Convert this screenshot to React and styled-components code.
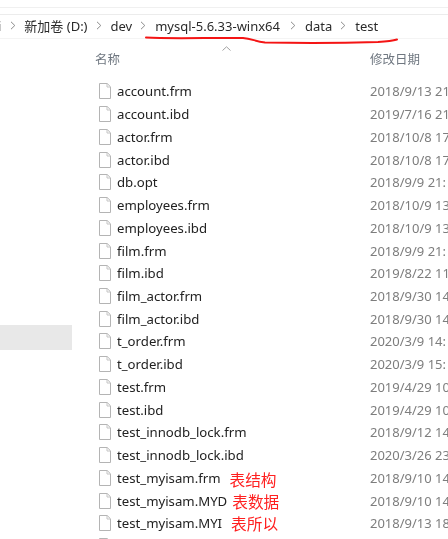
import React from "react";
import styled, { createGlobalStyle } from "styled-components";

const Global = createGlobalStyle`
  html, body { margin: 0; padding: 0; background: #fff; }
  body { width: 448px; height: 539px; overflow: hidden; font-family: "Noto Sans", "Noto Sans CJK SC", "Liberation Sans", sans-serif; }
`;

const Page = styled.div`
  position: relative;
  width: 448px;
  height: 539px;
  overflow: hidden;
  background: #fff;
`;

const TopStrip = styled.div`
  height: 7px;
  border-bottom: 1px solid #f0f0f0;
`;

const AddressBar = styled.div`
  height: 21px;
  margin-top: 6px;
  padding-bottom: 2px;
  border-top: 1px solid #ececec;
  border-bottom: 1px solid #f4f4f4;
  display: flex;
  align-items: center;
  font-size: 13px;
  color: #2a2a2a;
  white-space: nowrap;
  filter: blur(0.35px);
`;

const Crumb = styled.span`
  margin-left: ${(p) => p.$left}px;
`;

const Chevron = styled.svg`
  flex: none;
  width: 6px;
  height: 9px;
  margin-left: ${(p) => p.$left}px;
`;

const Body = styled.div`
  display: grid;
  grid-template-columns: 72px 1fr;
  height: 502px;
`;

const Sidebar = styled.aside`
  padding-top: 286px;
`;

const SideSelection = styled.div`
  height: 25px;
  background: #e8e8e8;
`;

const Main = styled.main`
  position: relative;
  min-width: 0;
`;

const SortCaret = styled.svg`
  position: absolute;
  left: 150px;
  top: 7px;
  width: 9px;
  height: 5px;
`;

const ColumnHeader = styled.div`
  display: grid;
  grid-template-columns: 275px 1fr;
  padding: 12px 0 0 23px;
  height: 25px;
  font-size: 12.5px;
  line-height: 18px;
  color: #6f7780;
  filter: blur(0.35px);
`;

const List = styled.div`
  padding-top: 4px;
`;

const Row = styled.div`
  display: grid;
  grid-template-columns: 275px 1fr;
  height: 22.74px;
  align-items: center;
  padding-left: 27px;
  white-space: nowrap;
  overflow: hidden;
  filter: blur(0.35px);
`;

const NameCell = styled.div`
  display: flex;
  align-items: center;
  min-width: 0;
`;

const FileIcon = styled.svg`
  flex: none;
  width: 12px;
  height: 16px;
  margin-right: 6px;
`;

const FileName = styled.span`
  font-size: 13.2px;
  color: #222;
`;

const Note = styled.span`
  margin-left: ${(p) => p.$left}px;
  margin-top: ${(p) => p.$top}px;
  font-size: 15.7px;
  line-height: 1;
  color: #ff2020;
  font-family: "Noto Sans CJK SC", sans-serif;
`;

const DateCell = styled.span`
  font-size: 13px;
  color: #7d7d7d;
  margin-left: -4px;
`;

const Underline = styled.svg`
  position: absolute;
  left: 0;
  top: 0;
  width: 448px;
  height: 60px;
  pointer-events: none;
`;

const files = [
  ["account.frm", "2018/9/13 21"],
  ["account.ibd", "2019/7/16 21"],
  ["actor.frm", "2018/10/8 17"],
  ["actor.ibd", "2018/10/8 17"],
  ["db.opt", "2018/9/9 21:"],
  ["employees.frm", "2018/10/9 13"],
  ["employees.ibd", "2018/10/9 13"],
  ["film.frm", "2018/9/9 21:"],
  ["film.ibd", "2019/8/22 11"],
  ["film_actor.frm", "2018/9/30 14"],
  ["film_actor.ibd", "2018/9/30 14"],
  ["t_order.frm", "2020/3/9 14:"],
  ["t_order.ibd", "2020/3/9 15:"],
  ["test.frm", "2019/4/29 10"],
  ["test.ibd", "2019/4/29 10"],
  ["test_innodb_lock.frm", "2018/9/12 14"],
  ["test_innodb_lock.ibd", "2020/3/26 23"],
  ["test_myisam.frm", "2018/9/10 14", "表结构", 9, 4],
  ["test_myisam.MYD", "2018/9/10 14", "表数据", 5, 2],
  ["test_myisam.MYI", "2018/9/13 18", "表所以", 9, 1],
  ["", ""],
];

const Sep = ({ left }) => (
  <Chevron $left={left} viewBox="0 0 6 9">
    <path d="M1 .8 4.8 4.5 1 8.2" fill="none" stroke="#8a8a8a" strokeWidth="1" />
  </Chevron>
);

const DocIcon = () => (
  <FileIcon viewBox="0 0 12 16">
    <path d="M.5.5h7.7l3.3 3.3v11.7H.5z" fill="#fff" stroke="#b4b4b4" />
    <path d="M8 .7v3.3h3.3" fill="none" stroke="#c4c4c4" />
  </FileIcon>
);

export default function App() {
  return (
    <Page>
      <Global />
      <TopStrip />
      <AddressBar>
        <Crumb $left={-2}>i</Crumb>
        <Sep left={9} />
        <Crumb $left={8}>新加卷 (D:)</Crumb>
        <Sep left={8} />
        <Crumb $left={9}>dev</Crumb>
        <Sep left={8} />
        <Crumb $left={9}>mysql-5.6.33-winx64</Crumb>
        <Sep left={10} />
        <Crumb $left={9}>data</Crumb>
        <Sep left={8} />
        <Crumb $left={9}>test</Crumb>
      </AddressBar>
      <Body>
        <Sidebar>
          <SideSelection />
        </Sidebar>
        <Main>
          <SortCaret viewBox="0 0 9 5">
            <path d="M.5 4.5 4.5.8l4 3.7" fill="none" stroke="#a0a0a0" />
          </SortCaret>
          <ColumnHeader>
            <span>名称</span>
            <span>修改日期</span>
          </ColumnHeader>
          <List>
            {files.map(([name, date, note, left, top], i) => (
              <Row key={i}>
                <NameCell>
                  <DocIcon />
                  <FileName>{name}</FileName>
                  {note && <Note $left={left} $top={top}>{note}</Note>}
                </NameCell>
                <DateCell>{date}</DateCell>
              </Row>
            ))}
          </List>
        </Main>
      </Body>
      <Underline viewBox="0 0 448 60">
        <path
          d="M146 37.5C170 39 215 37.5 243 38C252 38.5 255 41.5 265 42.5C300 43.2 345 43 378 42C386 41.5 392 41 397 39.5"
          fill="none"
          stroke="#f41414"
          strokeWidth="2"
          strokeLinecap="round"
        />
      </Underline>
    </Page>
  );
}
